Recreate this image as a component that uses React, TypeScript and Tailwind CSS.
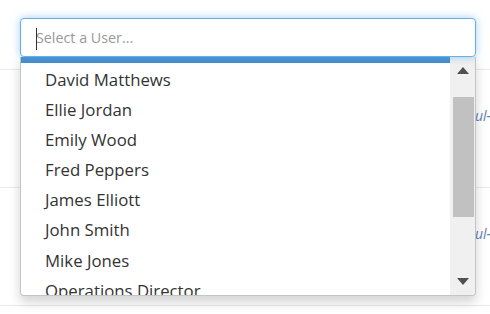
const USERS = [
  'David Matthews',
  'Ellie Jordan',
  'Emily Wood',
  'Fred Peppers',
  'James Elliott',
  'John Smith',
  'Mike Jones',
  'Operations Director',
]

function ScrollBar() {
  return (
    <div className="w-[25px] shrink-0 bg-[#f0f0f0] flex flex-col items-center pt-[10px]">
      <svg width="12" height="7" viewBox="0 0 12 7">
        <path d="M6 0 L12 7 L0 7 Z" fill="#505050" />
      </svg>
      <div className="mt-[23px] ml-[2px] w-[21px] h-[120px] bg-[#c1c1c1]" />
      <div className="flex-1" />
      <svg width="12" height="7" viewBox="0 0 12 7" className="mb-[10px]">
        <path d="M0 0 L12 0 L6 7 Z" fill="#505050" />
      </svg>
    </div>
  )
}

export default function App() {
  return (
    <div
      className="relative w-[490px] h-[314px] overflow-hidden bg-white"
      style={{ fontFamily: '"Open Sans", "Liberation Sans", sans-serif' }}
    >
      {/* page behind the dropdown */}
      <div className="pt-[69px]">
        {[0, 1].map((i) => (
          <div key={i} className="h-[118px] border-t border-[#e6e9ee] pt-[33px] pl-[475px] whitespace-nowrap overflow-hidden">
            <span className="text-[14px] leading-[20px] italic text-[#5f7fae]">ul-time</span>
          </div>
        ))}
        <div className="border-t border-[#e6e9ee]" />
      </div>

      {/* select + open menu */}
      <div className="absolute left-[20px] top-[18px] w-[456px]">
        <div className="relative h-[39px] rounded-[4px] border border-[#66afe9] bg-white shadow-[0_0_8px_rgba(102,175,233,0.6)] flex items-center pl-[15px]">
          <span className="absolute left-[15px] top-[9px] w-px h-[22px] bg-[#333]" />
          <span className="text-[14.3px] text-[#999]">Select a User...</span>
        </div>
        <div className="h-[239px] flex bg-white border-x border-b border-[#c4c4c4] rounded-b-[4px] overflow-hidden shadow-[0_6px_12px_rgba(0,0,0,0.175)]">
          <div className="flex-1 flex flex-col overflow-hidden">
            <div className="h-[6px] bg-[#428bca] shrink-0" />
            <div className="pt-[1px] flex flex-col">
              {USERS.map((u) => (
                <div key={u} className="h-[30.2px] shrink-0 flex items-center pl-[24px] text-[16.8px] text-[#333]">
                  {u}
                </div>
              ))}
            </div>
          </div>
          <ScrollBar />
        </div>
      </div>
    </div>
  )
}
